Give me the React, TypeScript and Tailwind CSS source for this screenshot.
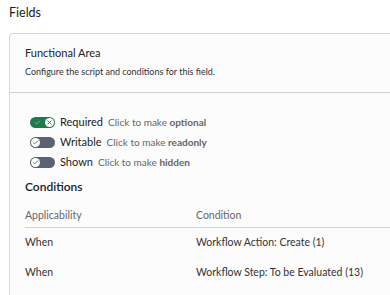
import { Check, X } from 'lucide-react'

const font = { fontFamily: 'Lato, "Noto Sans", sans-serif' }

function Toggle({ on }: { on: boolean }) {
  if (on) {
    return (
      <span className="flex h-[11px] w-[25px] items-center justify-between rounded-full bg-[#1f7a4d] pl-[4px] pr-[1px]">
        <Check className="h-[7px] w-[7px] text-[#7fb79a]" strokeWidth={3} />
        <span className="flex h-[9px] w-[9px] items-center justify-center rounded-full bg-white">
          <X className="h-[7px] w-[7px] text-[#1f7a4d]" strokeWidth={3} />
        </span>
      </span>
    )
  }
  return (
    <span className="flex h-[11px] w-[25px] items-center rounded-full bg-[#5b6372] pl-[1px]">
      <span className="flex h-[9px] w-[9px] items-center justify-center rounded-full bg-white">
        <Check className="h-[7px] w-[7px] text-[#5b6372]" strokeWidth={3} />
      </span>
    </span>
  )
}

const toggles = [
  { on: true, label: 'Required', hint: 'optional' },
  { on: false, label: 'Writable', hint: 'readonly' },
  { on: false, label: 'Shown', hint: 'hidden' },
]

const rows = [
  { when: 'When', cond: 'Workflow Action: Create (1)' },
  { when: 'When', cond: 'Workflow Step: To be Evaluated (13)' },
]

export default function App() {
  return (
    <div className="h-[295px] w-[390px] overflow-hidden bg-white text-[#222]" style={font}>
      <h1 className="flex h-[33px] items-start pl-[9px] pt-[3px] text-[12.5px] leading-[20px]">Fields</h1>
      <div className="ml-[9px] w-[420px] rounded-t-[4px] border border-[#d6d6d6] bg-[#fcfcfc]">
        <div className="h-[59px] border-b border-[#cfcfcf] pl-[15px] pt-[10px]">
          <div className="text-[11px] leading-[18px]">Functional Area</div>
          <div className="mt-[3px] text-[9px] leading-[14px] text-[#333]">
            Configure the script and conditions for this field.
          </div>
        </div>
        <div className="pl-[15px] pt-[19px]">
          <div className="flex flex-col pl-[5px]">
            {toggles.map((t) => (
              <div key={t.label} className="flex h-[20px] items-center gap-[5px]">
                <Toggle on={t.on} />
                <span className="text-[11px] leading-[16px] text-[#222]">{t.label}</span>
                <span className="text-[10px] leading-[16px] text-[#666]">
                  Click to make <b className="font-bold">{t.hint}</b>
                </span>
              </div>
            ))}
          </div>
          <h2 className="mt-[5px] text-[12px] font-semibold leading-[20px] text-[#222]">Conditions</h2>
          <div className="mt-[8px] w-[380px] text-[10.5px]">
            <div className="flex h-[23px] items-center border-b border-[#cfd3d8] text-[#666]">
              <span className="w-[171px]">Applicability</span>
              <span>Condition</span>
            </div>
            {rows.map((r) => (
              <div key={r.cond} className="flex h-[30px] items-center text-[#333]">
                <span className="w-[171px]">{r.when}</span>
                <span>{r.cond}</span>
              </div>
            ))}
          </div>
          <div className="h-[40px]" />
        </div>
      </div>
    </div>
  )
}
